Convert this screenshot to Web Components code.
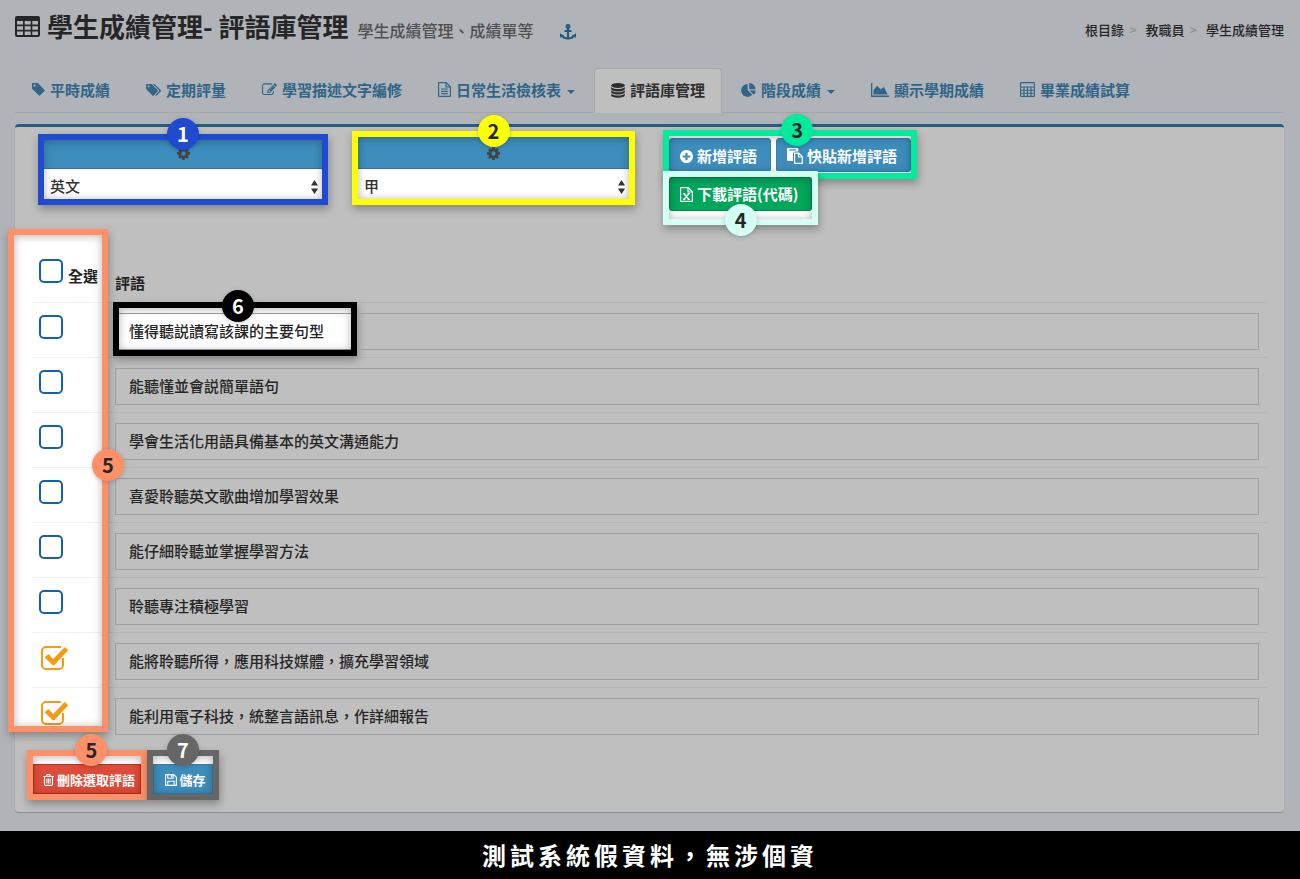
<!DOCTYPE html>
<html lang="zh-Hant">
<head>
<meta charset="utf-8">
<meta name="viewport" content="width=device-width, initial-scale=1">
<title>學生成績管理 - 評語庫管理</title>
<style>
  body { margin: 0; background: #b0b4b8; color: #262626; font: 500 15px/20px "Noto Sans CJK TC", "Noto Sans", sans-serif; }
</style>
</head>
<body>
<grade-app></grade-app>
<script>
const define = (name, html, setup) => {
  const tpl = document.createElement('template');
  tpl.innerHTML = html;
  customElements.define(name, class extends HTMLElement {
    constructor() {
      super();
      this.attachShadow({ mode: 'open' }).append(tpl.content.cloneNode(true));
    }
    connectedCallback() { if (setup) setup(this, this.shadowRoot); }
  });
};

/* Icon set: [viewBox width, viewBox height, markup] */
const ICONS = {
  table: [25, 21, '<path fill-rule="evenodd" d="M2 0h21a2 2 0 0 1 2 2v17a2 2 0 0 1-2 2H2a2 2 0 0 1-2-2V2a2 2 0 0 1 2-2zM2 5h6v3.500H2zM9.700 5h6v3.500h-6zM17.300 5h5.700v3.500h-5.700zM2 10.200h6v3.500H2zM9.700 10.200h6v3.500h-6zM17.300 10.200h5.700v3.500h-5.700zM2 15.400h6V19H2zM9.700 15.400h6V19h-6zM17.300 15.400h5.700V19h-5.700z"/>'],
  anchor: [16, 16, '<g fill="none" stroke="currentColor" stroke-width="2"><circle cx="8" cy="2.500" r="1.500"/><path d="M8 4v10.500M4.500 7h7M2 11.500c1 2 3.200 3 6 3s5-1 6-3"/></g><path d="M0 13.800V9.300l4.300 2.600zM16 13.800V9.300l-4.300 2.600z"/>'],
  tag: [1536, 1536, '<path transform="translate(-148 -150)" d="M576 448q0-53-37.500-90.500t-90.500-37.500-90.500 37.500-37.500 90.500 37.500 90.500 90.500 37.500 90.500-37.500 37.500-90.500zm1067 576q0 53-37 90l-491 492q-39 37-91 37-53 0-90-37l-715-716q-38-37-64.500-101t-26.500-117v-416q0-52 38-90t90-38h416q53 0 117 26.500t102 64.500l715 714q37 39 37 91z"/>'],
  tags: [1900, 1536, '<path transform="translate(0 -150)" d="M448 448q0-53-37.500-90.500t-90.500-37.500-90.500 37.500-37.500 90.500 37.500 90.500 90.500 37.500 90.500-37.500 37.500-90.500zm1067 576q0 53-37 90l-491 492q-39 37-91 37-53 0-90-37l-715-716q-38-37-64.500-101t-26.500-117v-416q0-52 38-90t90-38h416q53 0 117 26.500t102 64.500l715 714q37 39 37 91zm384 0q0 53-37 90l-491 492q-39 37-91 37-36 0-59-14t-53-45l470-470q37-37 37-90 0-52-37-91l-715-714q-38-38-102-64.500t-117-26.500h224q53 0 117 26.500t102 64.500l715 714q37 39 37 91z"/>'],
  edit: [1792, 1536, '<path transform="translate(0 -100)" d="M888 1184l116-116-152-152-116 116v56h96v96h56zm440-720q-16-16-33 1l-350 350q-17 17-1 33t33-1l350-350q17-17 1-33zm80 594v190q0 119-84.500 203.500t-203.500 84.500h-832q-119 0-203.500-84.500t-84.500-203.500v-832q0-119 84.500-203.500t203.500-84.500h832q63 0 117 25 15 7 18 23 3 17-9 29l-49 49q-14 14-32 8-23-6-45-6h-832q-66 0-113 47t-47 113v832q0 66 47 113t113 47h832q66 0 113-47t47-113v-126q0-13 9-22l64-64q15-15 35-7t20 29zm-96-738l288 288-672 672h-288v-288zm444 132l-92 92-288-288 92-92q28-28 68-28t68 28l152 152q28 28 28 68t-28 68z"/>'],
  file: [13, 15, '<path fill="none" stroke="currentColor" stroke-width="1.200" d="M1.600.6h6.600l4.200 4.200v9c0 .4-.2.600-.6.600H1.200c-.4 0-.6-.2-.6-.6V1.200c0-.4.2-.6.600-.6zM8 .6V5h4.400M3.200 7h6.600M3.200 9.300h6.600M3.200 11.600h6.600"/>'],
  excel: [13, 15, '<path fill="none" stroke="currentColor" stroke-width="1.200" d="M1.600.6h6.600l4.200 4.200v9c0 .4-.2.600-.6.600H1.200c-.4 0-.6-.2-.6-.6V1.200c0-.4.2-.6.600-.6zM8 .6V5h4.400"/><path fill="none" stroke="currentColor" stroke-width="1.300" d="M4 6.800l4.800 5.400M8.900 6.800L4 12.200M3 6.700h2.300M7.600 6.700h2.300M3 12.300h2.300M7.600 12.300h2.300"/>'],
  database: [14, 15, '<ellipse cx="7" cy="2.600" rx="6.800" ry="2.500"/><path d="M.2 4.100C1.500 5.700 4 6.100 7 6.100s5.500-.4 6.800-2v1.800C13.800 7.300 10.700 8.400 7 8.400S.2 7.300.2 5.900zM.2 7.300C1.500 8.900 4 9.300 7 9.300s5.500-.4 6.800-2v1.800c0 1.400-3.100 2.500-6.800 2.500S.2 10.500.2 9.100zM.2 10.500c1.300 1.600 3.800 2 6.800 2s5.500-.4 6.800-2v1.700c0 1.400-3.100 2.500-6.800 2.500S.2 13.600.2 12.200z"/>'],
  pie: [15, 14, '<path d="M6.700 1v6.300l4.500 4.500A6.400 6.400 0 1 1 6.700 1z"/><path d="M8.200 0a6.400 6.400 0 0 1 6.300 6.200H8.200zM8.400 7.500h6.300a6.300 6.300 0 0 1-1.900 4.300z"/>'],
  area: [18, 14, '<path d="M0 0h1.300v12.600H18V14H0z"/><path d="M2.500 11.500V7.300L6 2.800l3.600 3.500L13 4l3.500 7.500z"/>'],
  calculator: [15, 15, '<path fill="none" stroke="currentColor" stroke-width="1.100" d="M1.200.6h12.600c.4 0 .6.200.6.600v12.600c0 .4-.2.600-.6.600H1.200c-.4 0-.6-.2-.6-.6V1.200c0-.4.2-.6.600-.6zM.6 5h13.800M.6 8.200h13.800M.6 11.300h13.800M4 5v9.400M7.500 5v9.400M11 5v9.400"/>'],
  cog: [1536, 1536, '<path transform="translate(-128 -128)" d="M1152 896q0-106-75-181t-181-75-181 75-75 181 75 181 181 75 181-75 75-181zm512-109v222q0 12-8 23t-20 13l-185 28q-19 54-39 91 35 50 107 138 10 12 10 25t-9 23q-27 37-99 108t-94 71q-12 0-26-9l-138-108q-44 23-91 38-16 136-29 186-7 28-36 28h-222q-14 0-24.500-8.500t-11.500-21.500l-28-184q-49-16-90-37l-141 107q-10 9-25 9-14 0-25-11-126-114-165-168-7-10-7-23 0-12 8-23 15-21 51-66.500t54-70.500q-27-50-41-99l-183-27q-13-2-21-12.500t-8-23.500v-222q0-12 8-23t19-13l186-28q14-46 39-92-40-57-107-138-10-12-10-24 0-10 9-23 26-36 98.500-107.500t94.500-71.500q13 0 26 10l138 107q44-23 91-38 16-136 29-186 7-28 36-28h222q14 0 24.500 8.500t11.500 21.500l28 184q49 16 90 37l142-107q9-9 24-9 13 0 25 10 129 119 165 170 7 8 7 22 0 12-8 23-15 21-51 66.500t-54 70.500q26 50 41 98l183 28q13 2 21 12.500t8 23.500z"/>'],
  plus: [1536, 1536, '<path transform="translate(-128 -128)" d="M1344 960v-128q0-26-19-45t-45-19h-256v-256q0-26-19-45t-45-19h-128q-26 0-45 19t-19 45v256h-256q-26 0-45 19t-19 45v128q0 26 19 45t45 19h256v256q0 26 19 45t45 19h128q26 0 45-19t19-45v-256h256q26 0 45-19t19-45zm320-64q0 209-103 385.500t-279.500 279.500-385.500 103-385.500-103-279.500-279.500-103-385.500 103-385.500 279.500-279.500 385.500-103 385.500 103 279.500 279.500 103 385.500z"/>'],
  paste: [16, 16, '<path fill-rule="evenodd" d="M.8 0h9.700c.5 0 .8.300.8.800V3.500H8.500c-1.500 0-2.500 1-2.500 2.300V13H.8c-.5 0-.8-.3-.8-.8V.8C0 .3.300 0 .8 0zM2.300 1.200v1.200h6.600V1.200z"/><path fill="none" stroke="currentColor" stroke-width="1.200" d="M7.600 5.100h4.200l3.500 3.600v6.600H7.600zM11.500 5.300v3.700h3.600"/>'],
  trash: [11, 12, '<path fill="none" stroke="currentColor" stroke-width="1.100" d="M0 2.500h11M3.500 2.300L4.200.6h2.600l.7 1.700M1.500 2.800v7.400c0 .8.500 1.200 1.100 1.200h5.800c.6 0 1.100-.4 1.100-1.200V2.800M3.900 4.500v5M5.500 4.500v5M7.100 4.500v5"/>'],
  save: [12, 12, '<path fill="none" stroke="currentColor" stroke-width="1.100" d="M.6.6h8.200l2.600 2.600v8.200H.6zM2.800.8v3.400h5.400V.8M2.800 11.200V7.300h6.400v3.900"/><path d="M5.900.8h1.400v2.600H5.900z"/>']
};

customElements.define('app-icon', class extends HTMLElement {
  constructor() { super(); this.attachShadow({ mode: 'open' }); }
  connectedCallback() {
    const [w, h, body] = ICONS[this.getAttribute('name')];
    const size = this.getAttribute('size') || 15;
    this.shadowRoot.innerHTML = `<style>:host{display:inline-flex;flex:none}svg{display:block}</style>
      <svg width="${size}" height="${Math.round(size * h / w)}" viewBox="0 0 ${w} ${h}" fill="currentColor" aria-hidden="true">${body}</svg>`;
  }
});

/* Numbered circle used on every callout */
define('step-badge', `<style>
  :host { display: flex; align-items: center; justify-content: center; width: 32px; height: 32px; border-radius: 50%;
    background: var(--mark); color: var(--mark-ink, #262626); font: 700 20px/32px "Noto Sans CJK TC", "Noto Sans", sans-serif;
    box-shadow: 0 1px 5px rgba(0,0,0,.2); }
</style><slot></slot>`);

/* Coloured frame laid out around its content, with the badge on its top or bottom edge */
define('callout-frame', `<style>
  :host { display: block; position: relative; box-sizing: border-box; border: 6px solid var(--mark); background: #fff;
    box-shadow: 1px 4px 8px rgba(0,0,0,.3); }
  :host::after { content: ""; position: absolute; inset: 0; box-shadow: inset 0 1px 8px rgba(0,0,0,.3); pointer-events: none; }
  step-badge { position: absolute; z-index: 2; left: calc(var(--at, 50%) - 16px); top: -22px; }
  :host([edge="bottom"]) step-badge { top: auto; bottom: -17px; }
</style><slot></slot><step-badge></step-badge>`, (host, root) => {
  root.querySelector('step-badge').textContent = host.getAttribute('step');
});

/* Spotlight over existing content: white below it, frame above it */
define('callout-spot', `<style>
  :host { display: block; position: absolute; pointer-events: none; }
  .light, .frame { position: absolute; inset: 0; box-sizing: border-box; }
  .light { background: #fff; z-index: -1; box-shadow: 1px 4px 8px rgba(0,0,0,.3); }
  .frame { border: 6px solid var(--mark); z-index: 2; box-shadow: inset 0 1px 8px rgba(0,0,0,.3); }
  step-badge { position: absolute; z-index: 3; left: calc(50% - 13px); top: -12px; }
  :host([edge="right"]) step-badge { left: auto; right: -16px; top: calc(47% - 16px); }
</style><div class="light"></div><div class="frame"></div><step-badge></step-badge>`, (host, root) => {
  root.querySelector('step-badge').textContent = host.getAttribute('step');
});

define('page-header', `<style>
  :host { display: flex; justify-content: space-between; align-items: center; padding: 6px 16px 2px 15px; height: 40px; }
  h1 { display: flex; align-items: center; gap: 7px; margin: 0; font: 700 26px/40px "Noto Sans CJK TC", "Noto Sans", sans-serif; color: #262626; }
  .left { display: flex; align-items: center; }
  small { font-size: 16px; line-height: 24px; color: #505050; margin: 8px 26px 0 9px; }
  a { color: inherit; text-decoration: none; }
  .anchor { color: #1f5a86; padding-top: 12px; display: flex; }
  ol { display: flex; list-style: none; margin: 8px 0 0; padding: 0; font-size: 13px; }
  li + li::before { content: ">"; color: #8d9093; padding: 0 9px 0 5px; }
</style>
<div class="left"><h1><app-icon name="table" size="25"></app-icon><span>學生成績管理- 評語庫管理</span></h1>
<small>學生成績管理、成績單等</small><a class="anchor" href="#anchor" aria-label="錨點"><app-icon name="anchor" size="16"></app-icon></a></div>
<nav aria-label="路徑"><ol><li><a href="#root">根目錄</a></li><li><a href="#staff">教職員</a></li><li><a href="#grades">學生成績管理</a></li></ol></nav>`);

define('tab-item', `<style>
  :host { display: block; }
  a { display: flex; align-items: center; gap: 5px; height: 44px; box-sizing: border-box; padding: 0 16px 2px; border: 1px solid transparent; border-bottom: 0;
    border-radius: 4px 4px 0 0; color: #2e6589; font-weight: 700; text-decoration: none; white-space: nowrap; }
  :host([active]) { margin-bottom: -1px; }
  :host([active]) a { height: 45px; background: #bfbfbf; border-color: #a6a6a6; color: #2e2e2e; }
  i { display: none; border: 4px solid transparent; border-top-color: currentColor; border-bottom: 0; margin: 4px 0 0 1px; }
  :host([menu]) i { display: block; }
</style><a href="#"><slot></slot><i></i></a>`, (host, root) => {
  const link = root.querySelector('a');
  if (link.querySelector('app-icon')) return;
  const icon = document.createElement('app-icon');
  icon.setAttribute('name', host.getAttribute('icon'));
  icon.setAttribute('size', host.getAttribute('size'));
  link.prepend(icon);
  if (host.hasAttribute('active')) link.setAttribute('aria-current', 'page');
});

define('tab-bar', `<style>
  :host { display: flex; gap: 2px; margin: 20px 16px 0 15px; border-bottom: 1px solid #a6a6a6; }
</style><slot></slot>`);

define('filter-select', `<style>
  :host { display: block; color: #333; }
  label { display: flex; align-items: flex-end; justify-content: center; height: var(--head, 29px); box-sizing: border-box; padding-bottom: 8px;
    background: #3c8dbc; border-bottom: 1px solid #2f749d; color: #444; }
  .field { position: relative; display: block; }
  select { appearance: none; display: block; width: 100%; height: 30px; border: 0; padding: 4px 20px 0 6px; margin: 0; background: #fff; color: #333;
    font: 500 15px/24px "Noto Sans CJK TC", "Noto Sans", sans-serif; border-radius: 0; }
  svg { position: absolute; right: 4px; top: 11px; }
</style>
<label for="s"><app-icon name="cog" size="13"></app-icon></label>
<span class="field"><select id="s"><option></option></select>
<svg width="7" height="14" viewBox="0 0 7 14" fill="#333" aria-hidden="true"><path d="M0 5.500L3.500 0 7 5.500zM0 8.500L3.500 14 7 8.500z"/></svg></span>`, (host, root) => {
  root.querySelector('option').textContent = host.getAttribute('value');
  root.querySelector('select').setAttribute('aria-label', host.getAttribute('label'));
});

define('action-button', `<style>
  :host { display: block; }
  button { display: flex; align-items: center; justify-content: center; gap: 4px; width: 100%; height: 34px; margin: 0; padding: 2px 13px 0 10px; box-sizing: border-box; white-space: nowrap;
    border: 1px solid #367fa9; border-radius: 3px; background: #3c8dbc; color: #fff; font: 700 15px/20px "Noto Sans CJK TC", "Noto Sans", sans-serif; }
  :host([tone="green"]) button { background: #00a65a; border-color: #008d4c; padding-top: 0; }
  :host([tone="red"]) button { background: #dd4b39; border-color: #c23321; }
  :host([small]) button { height: 30px; font-size: 13px; gap: 3px; padding: 2px 5px 0 9px; border-radius: 0; }
</style><button type="button"><slot name="icon"></slot><slot></slot></button>`);

define('check-box', `<style>
  :host { display: block; }
  label { display: flex; position: relative; gap: 5px; height: 25px; white-space: nowrap; }
  input { appearance: none; display: block; flex: none; margin: 0; width: 24px; height: 24px; box-sizing: border-box; border: 2px solid #1262ab; border-radius: 5px; background: #fff; }
  svg { display: none; }
  span { padding-top: 7px; }
  input:checked { position: absolute; opacity: 0; }
  input:checked + svg { display: block; margin-left: 1px; }
</style><label><input type="checkbox">
<svg width="29" height="26" viewBox="0 0 29 26" fill="none" aria-hidden="true"><path stroke="#f39c12" stroke-width="2" d="M21 2H6a4 4 0 0 0-4 4v14a4 4 0 0 0 4 4h13a4 4 0 0 0 4-4v-7"/><path fill="#f39c12" d="M5.200 11.800l2.600-2.300q.6-.4 1.200.1l4.100 4.300L24.300 2.500q.6-.5 1.200 0l2.200 2.200q.5.5 0 1.100L14.500 20q-1 .9-2 0l-7.300-7q-.6-.6 0-1.200z"/></svg><span><slot></slot></span></label>`, (host, root) => {
  const input = root.querySelector('input');
  input.checked = host.hasAttribute('checked');
  if (host.hasAttribute('label')) input.setAttribute('aria-label', host.getAttribute('label'));
});

const ROWS = ['懂得聽説讀寫該課的主要句型', '能聽懂並會説簡單語句', '學會生活化用語具備基本的英文溝通能力', '喜愛聆聽英文歌曲增加學習效果',
  '能仔細聆聽並掌握學習方法', '聆聽專注積極學習', '能將聆聽所得，應用科技媒體，擴充學習領域', '能利用電子科技，統整言語訊息，作詳細報告'];

define('comment-table', `<style>
  :host { display: block; position: relative; isolation: isolate; margin: 20px 17px 0 16px; }
  table { width: 100%; border-collapse: separate; border-spacing: 0; table-layout: fixed; }
  col.pick { width: 76px; }
  th { text-align: left; vertical-align: bottom; font-weight: 700; color: #1f1f1f; height: 57px; box-sizing: border-box; padding: 0 8px 9px; }
  th check-box { height: 34px; }
  td { height: 55px; box-sizing: border-box; border-top: 1px solid rgba(0,0,0,.05); padding: 10px 8px 7px; vertical-align: top; }
  td check-box { margin-top: 2px; }
  input { display: block; width: 100%; height: 37px; box-sizing: border-box; border: 1px solid #9c9fa6; border-radius: 0; background: none; margin: 0; padding: 0 13px 3px;
    color: #262626; font: 500 15px/20px "Noto Sans CJK TC", "Noto Sans", sans-serif; }
  .column { --mark: #ff9067; left: -23px; width: 100px; top: -16px; bottom: 10px; }
  .entry { --mark: #000; --mark-ink: #fff; left: 82px; width: 244px; top: 57px; height: 54px; }
</style>
<table><colgroup><col class="pick"><col></colgroup>
<thead><tr><th scope="col"><check-box>全選</check-box></th><th scope="col">評語</th></tr></thead><tbody></tbody></table>
<callout-spot class="column" step="5" edge="right"></callout-spot>
<callout-spot class="entry" step="6"></callout-spot>`, (host, root) => {
  root.querySelector('tbody').innerHTML = ROWS.map((text, i) =>
    `<tr><td><check-box label="選取：${text}"${i > 5 ? ' checked' : ''}></check-box></td><td><input type="text" aria-label="評語 ${i + 1}" value="${text}"></td></tr>`).join('');
});

define('grade-app', `<style>
  :host { display: flex; flex-direction: column; min-height: 100vh; }
  main { flex: 1; }
  .panel { margin: 11px 16px 18px 15px; border-top: 3px solid #235f85; border-radius: 4px; background: #bfbfbf; box-shadow: 0 1px 1px rgba(0,0,0,.2); padding-bottom: 12px; }
  .top { display: grid; grid-template-columns: 597fr 632fr; padding: 3px 17px 0 23px; }
  .filters { display: grid; grid-template-columns: 290fr 283fr; gap: 24px; align-items: end; height: 75px; }
  .tools { display: flex; flex-direction: column; align-items: flex-start; padding-left: 28px; }
  .line { display: flex; gap: 5px; height: 35px; padding-top: 2px; box-sizing: border-box; }
  .add { height: 49px; }
  .export { height: 54px; margin-top: -8px; z-index: 1; }
  .m1 { --mark: #204bd0; --mark-ink: #fff; }
  .m2 { --mark: #ffff00; --head: 32px; }
  .m3 { --mark: #00eb9c; --at: 53%; }
  .m4 { --mark: #d3fff4; }
  .m5 { --mark: #ff9067; --at: 54%; }
  .m7 { --mark: #666; --mark-ink: #fff; min-width: 72px; }
  .foot { display: flex; padding: 8px 12px 0; position: relative; z-index: 1; }
  .foot callout-frame { padding-top: 8px; height: 50px; }
  footer { background: #000; color: #fff; text-align: center; font-size: 24px; line-height: 48px; font-weight: 700; letter-spacing: 4px; }
</style>
<main>
<page-header></page-header>
<tab-bar>
  <tab-item icon="tag" size="13">平時成績</tab-item>
  <tab-item icon="tags" size="15">定期評量</tab-item>
  <tab-item icon="edit" size="15">學習描述文字編修</tab-item>
  <tab-item icon="file" size="13" menu>日常生活檢核表</tab-item>
  <tab-item icon="database" size="14" active>評語庫管理</tab-item>
  <tab-item icon="pie" size="15" menu>階段成績</tab-item>
  <tab-item icon="area" size="18">顯示學期成績</tab-item>
  <tab-item icon="calculator" size="15">畢業成績試算</tab-item>
</tab-bar>
<section class="panel">
  <div class="top">
    <div class="filters">
      <callout-frame class="m1" step="1"><filter-select label="科目" value="英文"></filter-select></callout-frame>
      <callout-frame class="m2" step="2"><filter-select label="等第" value="甲"></filter-select></callout-frame>
    </div>
    <div class="tools">
      <callout-frame class="m3 add" step="3"><div class="line">
        <action-button><app-icon slot="icon" name="plus" size="13"></app-icon>新增評語</action-button>
        <action-button><app-icon slot="icon" name="paste" size="16"></app-icon>快貼新增評語</action-button></div></callout-frame>
      <callout-frame class="m4 export" step="4" edge="bottom"><action-button tone="green"><app-icon slot="icon" name="excel" size="13"></app-icon>下載評語(代碼)</action-button></callout-frame>
    </div>
  </div>
  <comment-table></comment-table>
  <div class="foot">
    <callout-frame class="m5" step="5"><action-button tone="red" small><app-icon slot="icon" name="trash" size="11"></app-icon>刪除選取評語</action-button></callout-frame>
    <callout-frame class="m7" step="7"><action-button small><app-icon slot="icon" name="save" size="12"></app-icon>儲存</action-button></callout-frame>
  </div>
</section>
</main>
<footer>測試系統假資料，無涉個資</footer>`);
</script>
</body>
</html>
